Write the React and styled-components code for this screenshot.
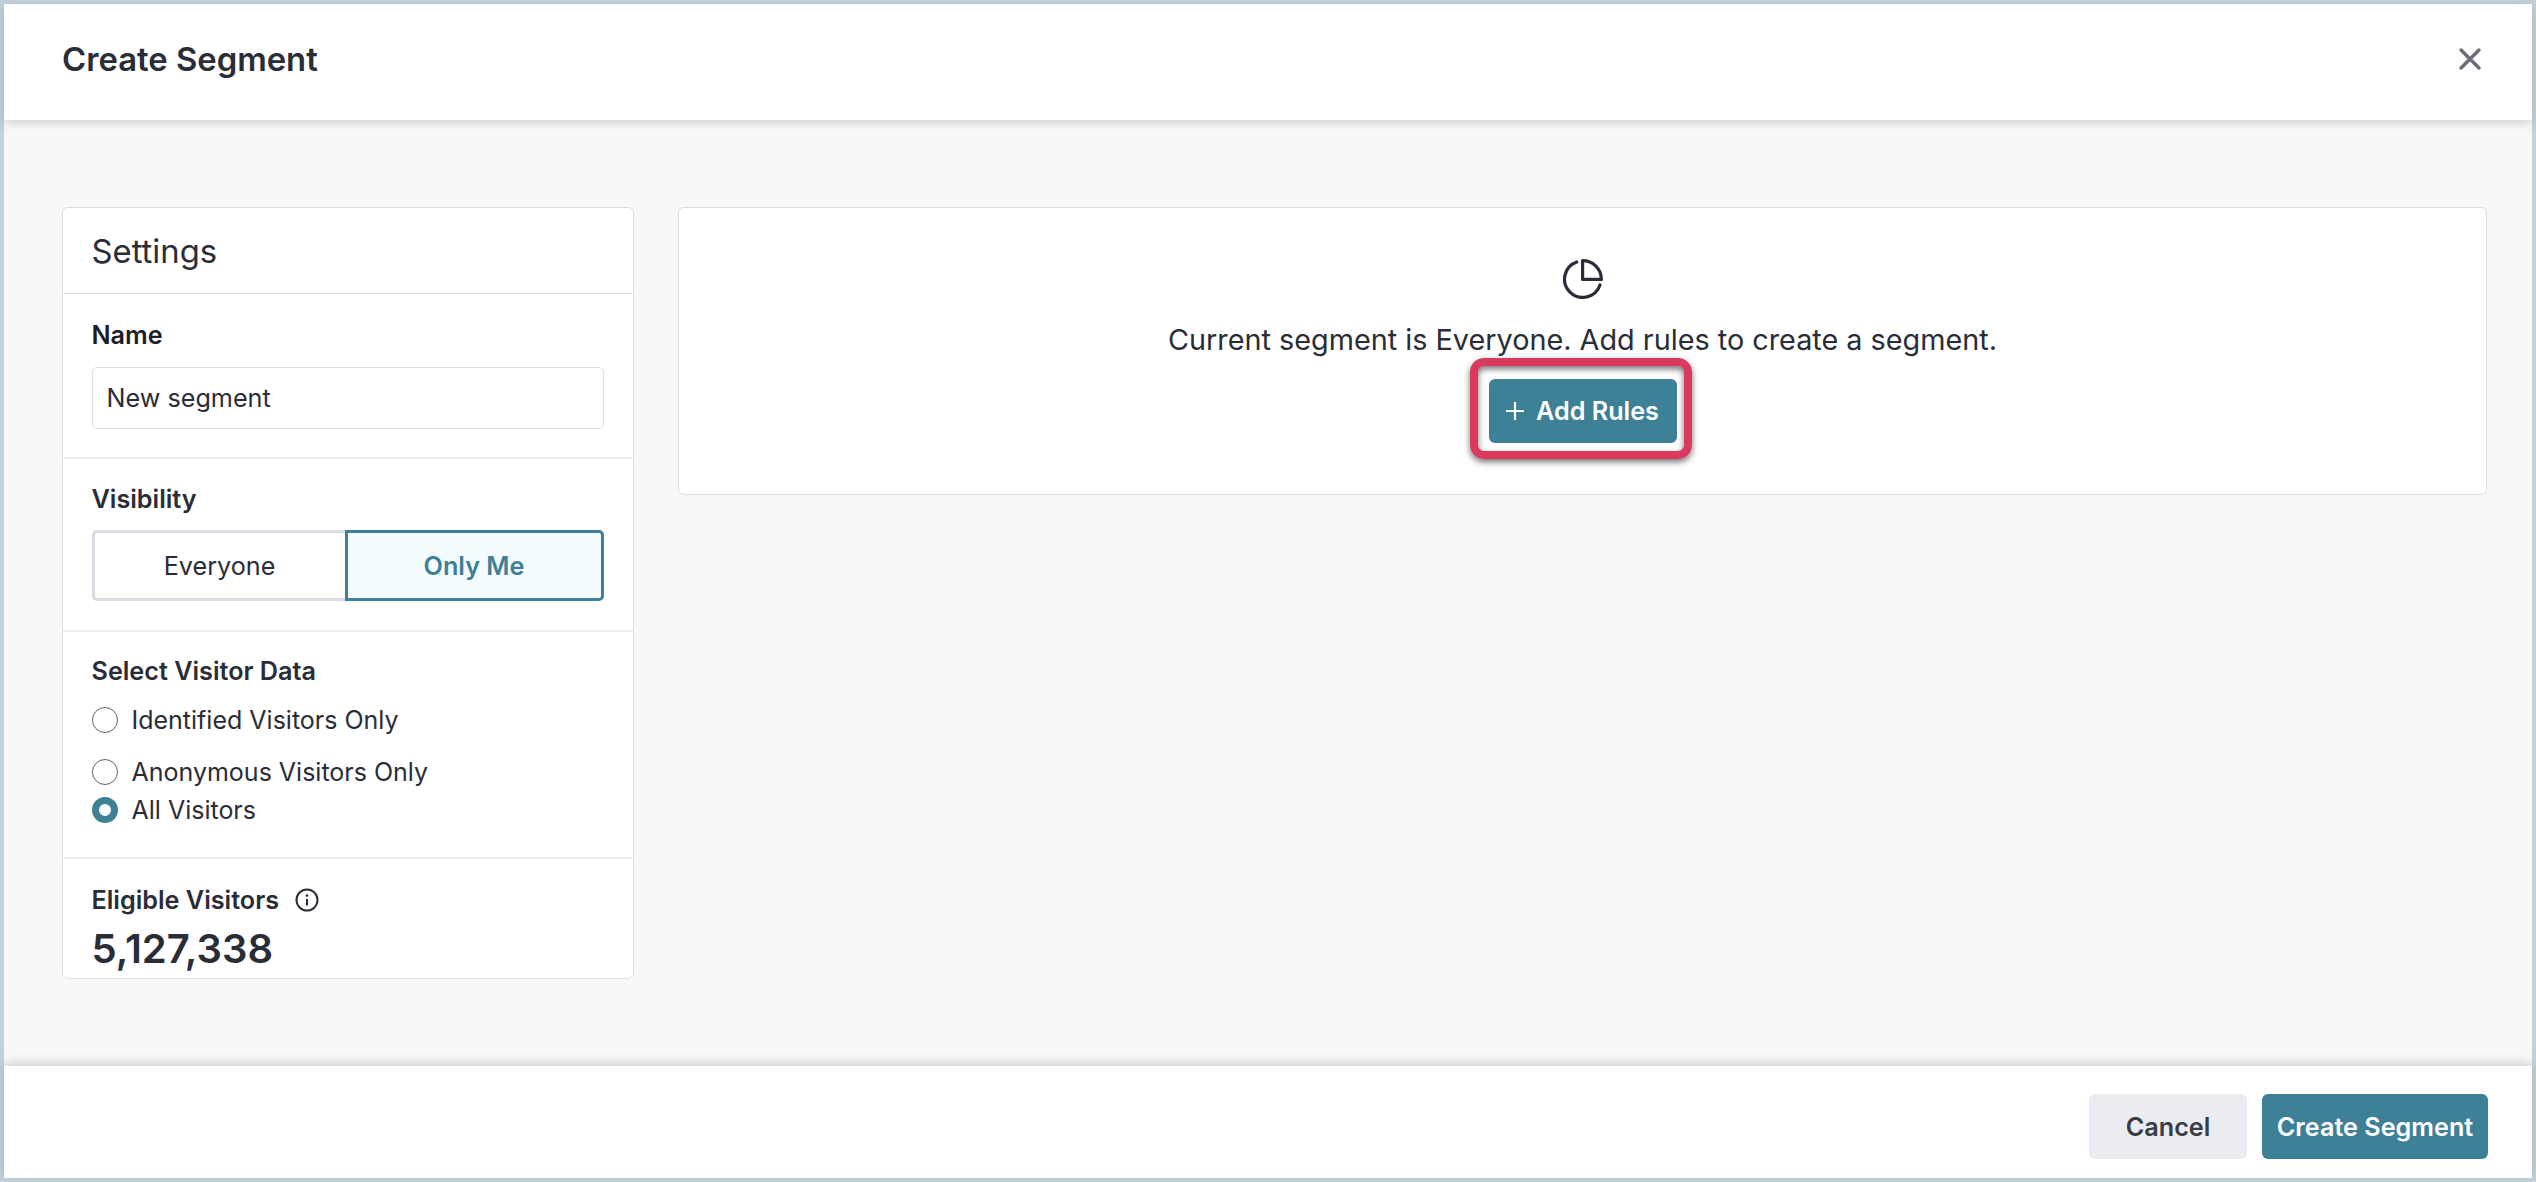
import React from "react";
import styled, { createGlobalStyle } from "styled-components";

const GlobalStyle = createGlobalStyle`
  html, body {
    margin: 0;
    padding: 0;
    height: 100%;
  }
  body {
    font-family: Inter, "Liberation Sans", sans-serif;
    color: #2a2d37;
  }
  * {
    box-sizing: border-box;
  }
`;

const Frame = styled.div`
  width: 2536px;
  height: 1182px;
  padding: 4px;
  background: #c3d1da;
`;

const Modal = styled.div`
  height: 100%;
  display: flex;
  flex-direction: column;
  background: #f8f8f8;
`;

const Header = styled.header`
  height: 116px;
  flex: none;
  display: flex;
  align-items: center;
  justify-content: space-between;
  padding: 0 50px 6px 58px;
  background: #fff;
  box-shadow: 0 3px 10px rgba(0, 0, 0, 0.16);
  position: relative;
`;

const Title = styled.h1`
  margin: 0;
  font-size: 32.8px;
  font-weight: 600;
  line-height: 40px;
`;

const CloseButton = styled.button`
  padding: 0;
  border: 0;
  background: none;
  display: flex;
  color: #6b6c78;
`;

const Body = styled.main`
  flex: 1;
  display: flex;
  align-items: flex-start;
  gap: 44px;
  padding: 87px 45px 0 58px;
`;

const Card = styled.section`
  background: #fff;
  border: 1px solid #dcdde6;
  border-radius: 6px;
`;

const Sidebar = styled(Card)`
  width: 572px;
  flex: none;
`;

const SettingsTitle = styled.h2`
  margin: 0;
  height: 86px;
  padding-left: 28.5px;
  display: flex;
  align-items: center;
  font-size: 32.8px;
  font-weight: 400;
  border-bottom: 1px solid #dcdde6;
`;

const Section = styled.div`
  padding: ${(p) => p.$padding};
  border-bottom: ${(p) => (p.$last ? "0" : "2px solid #ecedf1")};
`;

const Label = styled.div`
  font-size: 25.2px;
  font-weight: 600;
  line-height: 32px;
  color: ${(p) => (p.$dark ? "#1c1e26" : "#2a2d37")};
`;

const NameInput = styled.input`
  display: block;
  width: 512px;
  height: 62px;
  margin-top: 16px;
  padding: 0 14px;
  border: 1px solid #dcdde6;
  border-radius: 5px;
  background: #fff;
  font: 400 25.2px Inter, sans-serif;
  color: #2a2d37;
`;

const Toggle = styled.div`
  display: flex;
  width: 512px;
  margin-top: 15px;
  height: 71px;
`;

const ToggleOption = styled.div`
  flex: ${(p) => (p.$active ? "1" : "0 0 253px")};
  display: flex;
  align-items: center;
  justify-content: center;
  font-size: 25.2px;
  border: 3px solid ${(p) => (p.$active ? "#3e8096" : "#d9dce3")};
  border-right-width: ${(p) => (p.$active ? "3px" : "0")};
  border-radius: ${(p) => (p.$active ? "0 5px 5px 0" : "5px 0 0 5px")};
  background: ${(p) => (p.$active ? "#f3fbff" : "#fff")};
  color: ${(p) => (p.$active ? "#3e8096" : "#2a2d37")};
  font-weight: ${(p) => (p.$active ? 600 : 400)};
`;

const RadioList = styled.div`
  margin-top: 17px;
  display: flex;
  flex-direction: column;
`;

const RadioRow = styled.label`
  display: flex;
  align-items: center;
  gap: 14px;
  height: 32px;
  font-size: 25px;
  margin-bottom: ${(p) => p.$gap || 0}px;
`;

const RadioDot = styled.span`
  width: 26px;
  height: 26px;
  flex: none;
  border-radius: 50%;
  background: #fff;
  border: ${(p) => (p.$checked ? "7.5px solid #3e8096" : "1.2px solid #5f6270")};
`;

const InfoLabel = styled(Label)`
  display: flex;
  align-items: center;
  gap: 16px;
`;

const Count = styled.div`
  font-size: 40px;
  font-weight: 600;
  line-height: 48px;
  margin-top: 9px;
`;

const EmptyCard = styled(Card)`
  flex: 1;
  height: 288px;
  display: flex;
  flex-direction: column;
  align-items: center;
  padding-top: 51px;
`;

const EmptyText = styled.p`
  margin: 21px 0 0;
  font-size: 28.8px;
  line-height: 40px;
`;

const AddWrap = styled.div`
  position: relative;
  margin-top: 19px;
`;

const Btn = styled.button`
  height: ${(p) => p.$height || 65}px;
  width: ${(p) => p.$width}px;
  padding: 0;
  display: flex;
  align-items: center;
  justify-content: center;
  gap: 12px;
  border: 0;
  border-radius: 6px;
  font: 600 25.2px Inter, sans-serif;
  background: ${(p) => (p.$secondary ? "#ebecf1" : "#3e8096")};
  color: ${(p) => (p.$secondary ? "#3a3c45" : "#fff")};
`;

const Highlight = styled.div`
  position: absolute;
  inset: -21px -15px -16px -19px;
  border: 8px solid #d9395d;
  border-radius: 14px;
  box-shadow: 0 3px 6px rgba(40, 40, 40, 0.65), inset 0 3px 6px rgba(40, 40, 40, 0.65);
  pointer-events: none;
`;

const Footer = styled.footer`
  height: 112px;
  flex: none;
  display: flex;
  align-items: flex-start;
  justify-content: flex-end;
  gap: 15px;
  padding: 28px 44px 0 0;
  background: #fff;
  box-shadow: 0 -3px 10px rgba(0, 0, 0, 0.16);
`;

const CloseIcon = () => (
  <svg width="24" height="24" viewBox="0 0 24 24" fill="none" stroke="currentColor" strokeWidth="3.4" strokeLinecap="round">
    <path d="M3 3 L21 21 M21 3 L3 21" />
  </svg>
);

const PieIcon = () => (
  <svg width="40" height="40" viewBox="0 0 40 40" fill="none" stroke="#2a2d37" strokeWidth="3.2" strokeLinecap="round" strokeLinejoin="round">
    <path d="M13.7 3 A18.2 18.2 0 1 0 37 26" />
    <path d="M19.6 1.6 A18.8 18.8 0 0 1 38.4 20.4 H19.6 Z" />
  </svg>
);

const InfoIcon = () => (
  <svg width="24" height="24" viewBox="0 0 24 24" fill="none" stroke="#2a2d37" strokeWidth="2">
    <circle cx="12" cy="12" r="10.5" />
    <path d="M12 11 V17.5" />
    <circle cx="12" cy="7.5" r="1.3" fill="#2a2d37" stroke="none" />
  </svg>
);

const PlusIcon = () => (
  <svg width="18" height="18" viewBox="0 0 18 18" fill="none" stroke="currentColor" strokeWidth="2.2">
    <path d="M9 0 V18 M0 9 H18" />
  </svg>
);

const radios = [
  { label: "Identified Visitors Only", gap: 20 },
  { label: "Anonymous Visitors Only", gap: 6 },
  { label: "All Visitors", checked: true },
];

const App = () => {
  return (
    <>
      <GlobalStyle />
      <Frame>
        <Modal>
          <Header>
            <Title>Create Segment</Title>
            <CloseButton aria-label="Close">
              <CloseIcon />
            </CloseButton>
          </Header>
          <Body>
            <Sidebar>
              <SettingsTitle>Settings</SettingsTitle>
              <Section $padding="25px 28.5px 28px">
                <Label $dark>Name</Label>
                <NameInput defaultValue="New segment" />
              </Section>
              <Section $padding="24px 28.5px 29px">
                <Label>Visibility</Label>
                <Toggle>
                  <ToggleOption>Everyone</ToggleOption>
                  <ToggleOption $active>Only Me</ToggleOption>
                </Toggle>
              </Section>
              <Section $padding="23px 28.5px 31px">
                <Label>Select Visitor Data</Label>
                <RadioList>
                  {radios.map((r) => (
                    <RadioRow key={r.label} $gap={r.gap}>
                      <RadioDot $checked={r.checked} />
                      {r.label}
                    </RadioRow>
                  ))}
                </RadioList>
              </Section>
              <Section $padding="25px 28.5px 5px" $last>
                <InfoLabel>
                  Eligible Visitors
                  <InfoIcon />
                </InfoLabel>
                <Count>5,127,338</Count>
              </Section>
            </Sidebar>
            <EmptyCard>
              <PieIcon />
              <EmptyText>Current segment is Everyone. Add rules to create a segment.</EmptyText>
              <AddWrap>
                <Btn $height={64} $width={188}>
                  <PlusIcon />
                  Add Rules
                </Btn>
                <Highlight />
              </AddWrap>
            </EmptyCard>
          </Body>
          <Footer>
            <Btn $secondary $width={158}>Cancel</Btn>
            <Btn $width={226}>Create Segment</Btn>
          </Footer>
        </Modal>
      </Frame>
    </>
  );
};

export default App;
